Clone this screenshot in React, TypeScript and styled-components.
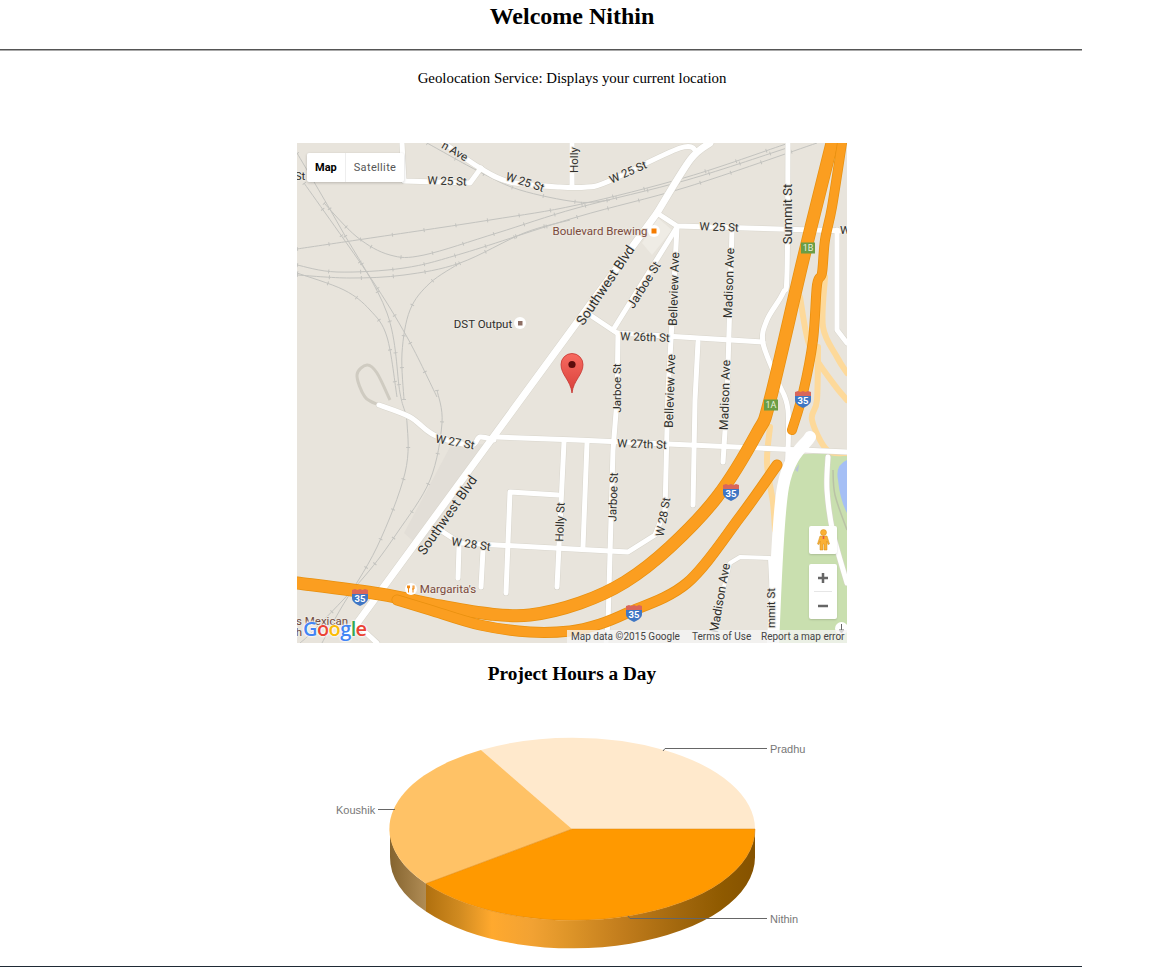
import React from 'react';
import styled, { createGlobalStyle } from 'styled-components';

type Pt = [number, number];
type Line = { pts: Pt[]; w: number; curved?: boolean };
type Label = { t: string; x: number; y: number; r?: number; c?: string; s?: number };

const GlobalStyle = createGlobalStyle`
  html, body { margin: 0; padding: 0; background: #fff; overflow: hidden; }
  body { font-family: "Liberation Serif", "Times New Roman", serif; color: #000; }
`;

const Page = styled.div`
  width: 1144px;
  height: 967px;
  display: flex;
  flex-direction: column;
`;

const Title = styled.h2`
  margin: 0;
  height: 32px;
  line-height: 32px;
  font-size: 24px;
  font-weight: bold;
  text-align: center;
`;

const Rule = styled.hr<{ $dark?: boolean }>`
  flex: none;
  width: 1082px;
  height: 0;
  margin: ${(p) => (p.$dark ? '0' : '17px 0 0')};
  border: 0;
  border-top: 1px solid ${(p) => (p.$dark ? '#1f2a35' : '#555')};
  border-bottom: 1px solid #aaa;
`;

const Intro = styled.p`
  margin: 18px 0 0;
  line-height: 18px;
  font-size: 14.85px;
  text-align: center;
`;

const MapBox = styled.div`
  position: relative;
  flex: none;
  width: 550px;
  height: 500px;
  margin: 56px auto 0;
  overflow: hidden;
  background: #e8e4dc;
  font-family: Roboto, "Liberation Sans", sans-serif;
`;

const MapArt = styled.svg`
  display: block;
  text {
    font-family: Roboto, "Liberation Sans", sans-serif;
    font-size: 11.5px;
    text-anchor: middle;
    dominant-baseline: central;
    paint-order: stroke;
    stroke: #ece9e2;
    stroke-width: 2px;
    stroke-linejoin: round;
  }
`;

const TypeControl = styled.div`
  position: absolute;
  top: 10px;
  left: 10px;
  display: flex;
  height: 29px;
  background: #fff;
  border-radius: 2px;
  box-shadow: 0 1px 3px rgba(0, 0, 0, 0.2);
`;

const TypeTab = styled.div<{ $active?: boolean }>`
  padding: 0 8px;
  line-height: 29px;
  font-size: 11px;
  font-weight: ${(p) => (p.$active ? 'bold' : 'normal')};
  letter-spacing: ${(p) => (p.$active ? '0' : '0.35px')};
  color: ${(p) => (p.$active ? '#000' : '#565656')};
  border-left: ${(p) => (p.$active ? '0' : '1px solid #eee')};
`;

const ControlCard = styled.div`
  position: absolute;
  right: 10px;
  width: 28px;
  background: #fff;
  border-radius: 2px;
  box-shadow: 0 1px 2px rgba(0, 0, 0, 0.15);
  display: flex;
  flex-direction: column;
  align-items: center;
`;

const Pegman = styled(ControlCard)`
  top: 383px;
  height: 28px;
  justify-content: center;
`;

const Zoomer = styled(ControlCard)`
  top: 421px;
  height: 55px;
`;

const ZoomKey = styled.div`
  flex: 1;
  display: flex;
  align-items: center;
  justify-content: center;
`;

const ZoomSep = styled.div`
  width: 18px;
  height: 1px;
  background: #e6e6e6;
`;

const PinHint = styled.div`
  position: absolute;
  right: 0;
  bottom: 13px;
  width: 13px;
  height: 13px;
  border-radius: 50%;
  background: #fff;
  transform: translate(1px, 5px);
  display: flex;
  align-items: center;
  justify-content: center;
`;

const Attribution = styled.div`
  position: absolute;
  right: 0;
  bottom: 0;
  width: 280px;
  height: 13px;
  display: flex;
  background: rgba(245, 245, 245, 0.78);
  font-size: 10px;
  line-height: 13px;
  color: #444;
`;

const AttrItem = styled.span<{ $w: number }>`
  width: ${(p) => p.$w}px;
  padding-left: 4px;
  box-sizing: border-box;
  white-space: nowrap;
`;

const GoogleLogo = styled.div`
  position: absolute;
  left: 6px;
  bottom: 1px;
  font-family: "Open Sans", "Liberation Sans", sans-serif;
  font-size: 20px;
  line-height: 26px;
  font-weight: 600;
  letter-spacing: -0.6px;
  text-shadow: 0 0 2px #fff, 0 0 2px #fff, 0 0 3px #fff;
`;

const LogoLetter = styled.span<{ $c: string }>`
  color: ${(p) => p.$c};
`;

const ChartTitle = styled.h3`
  margin: 20px 0 0;
  line-height: 22px;
  font-size: 19.3px;
  font-weight: bold;
  text-align: center;
`;

const ChartBox = styled.div`
  flex: none;
  width: 550px;
  height: 281px;
  margin: 0 auto;
  svg { display: block; }
  text {
    font-family: "Liberation Sans", Arial, sans-serif;
    font-size: 11px;
    fill: #777;
  }
`;

// Catmull-Rom through the points, keeps the curved roads from looking like polylines
const smooth = (pts: Pt[]) => {
  let d = `M${pts[0][0]} ${pts[0][1]}`;
  for (let i = 0; i < pts.length - 1; i++) {
    const p0 = pts[Math.max(i - 1, 0)];
    const p1 = pts[i];
    const p2 = pts[i + 1];
    const p3 = pts[Math.min(i + 2, pts.length - 1)];
    const c1x = p1[0] + (p2[0] - p0[0]) / 6;
    const c1y = p1[1] + (p2[1] - p0[1]) / 6;
    const c2x = p2[0] - (p3[0] - p1[0]) / 6;
    const c2y = p2[1] - (p3[1] - p1[1]) / 6;
    d += ` C${c1x.toFixed(1)} ${c1y.toFixed(1)} ${c2x.toFixed(1)} ${c2y.toFixed(1)} ${p2[0]} ${p2[1]}`;
  }
  return d;
};

const straight = (pts: Pt[]) => 'M' + pts.map((p) => `${p[0]} ${p[1]}`).join(' L');

const roadPath = (r: Line) => (r.curved ? smooth(r.pts) : straight(r.pts));

const rails: Pt[][] = [
  [[297, 249], [364, 239], [490, 220], [577, 205], [687, 177], [783, 145], [790, 143]],
  [[324, 203], [357, 237], [390, 255], [424, 255], [497, 233], [577, 208], [687, 180], [790, 147]],
  [[297, 265], [337, 272], [404, 268], [464, 253], [577, 217], [687, 187], [817, 143]],
  [[297, 275], [350, 278], [404, 275], [460, 263], [524, 233], [570, 220]],
  [[460, 263], [430, 283], [410, 310], [402, 353], [404, 400]],
  [[437, 390], [442, 423], [430, 480], [397, 533], [364, 577], [314, 630], [300, 643]],
  [[297, 153], [340, 227], [387, 313], [400, 393], [407, 423], [405, 473], [377, 547], [340, 610], [322, 643]],
  [[304, 183], [370, 277], [407, 337], [437, 397]],
  [[297, 273], [344, 290], [370, 310], [387, 337], [397, 397]],
  [[427, 143], [480, 172], [520, 190], [577, 202], [610, 200]],
];

const ramps: Line[] = [
  { pts: [[800, 297], [810, 347], [833, 383], [847, 400]], w: 6, curved: true },
  { pts: [[825, 277], [823, 327], [837, 357], [847, 373]], w: 6, curved: true },
  { pts: [[818, 347], [817, 400], [812, 420], [827, 450], [847, 453]], w: 6, curved: true },
  { pts: [[770, 427], [767, 463], [773, 503], [775, 530]], w: 6, curved: true },
];

const roads: Line[] = [
  { pts: [[402, 143], [404, 181], [470, 183], [481, 168]], w: 5 },
  { pts: [[444, 143], [480, 168], [510, 182], [560, 187], [587, 187], [607, 182], [680, 148], [697, 152]], w: 5, curved: true },
  { pts: [[572, 143], [572, 187]], w: 5 },
  { pts: [[710, 143], [690, 160], [657, 213]], w: 7, curved: true },
  { pts: [[657, 213], [347, 637]], w: 7 },
  { pts: [[363, 630], [377, 643]], w: 5 },
  { pts: [[657, 213], [677, 226], [847, 231]], w: 5 },
  { pts: [[677, 227], [613, 330]], w: 5 },
  { pts: [[677, 227], [671, 340], [668, 390], [665, 510]], w: 5 },
  { pts: [[665, 510], [655, 535], [628, 552], [460, 543], [440, 530]], w: 5 },
  { pts: [[590, 315], [617, 333], [763, 342]], w: 5 },
  { pts: [[618, 333], [617, 400], [613, 450], [608, 623], [606, 643]], w: 5 },
  { pts: [[732, 230], [727, 400], [723, 462]], w: 5 },
  { pts: [[698, 342], [695, 400], [693, 505]], w: 5 },
  { pts: [[497, 437], [577, 440], [847, 452]], w: 5 },
  { pts: [[379, 405], [410, 417], [434, 435], [470, 445], [480, 437], [494, 440]], w: 5, curved: true },
  { pts: [[587, 443], [583, 547]], w: 5 },
  { pts: [[564, 442], [557, 587]], w: 5 },
  { pts: [[558, 495], [510, 492], [506, 593]], w: 5 },
  { pts: [[459, 547], [458, 578]], w: 5 },
  { pts: [[483, 550], [481, 587]], w: 5 },
  { pts: [[788, 143], [787, 273], [783, 293], [767, 320], [763, 343], [777, 380], [788, 410], [787, 477]], w: 5, curved: true },
  { pts: [[713, 630], [730, 563], [740, 557], [770, 558], [772, 597]], w: 4 },
  { pts: [[837, 230], [837, 330], [847, 343]], w: 5 },
  { pts: [[828, 457], [827, 490], [833, 533], [847, 583]], w: 5, curved: true },
];

const highways: Line[] = [
  { pts: [[832, 143], [803, 260], [770, 400], [757, 433], [717, 497], [670, 547], [625, 582], [580, 603], [530, 615], [490, 614], [440, 606], [380, 594], [297, 583]], w: 13 },
  { pts: [[842, 143], [832, 207], [825, 240], [822, 273], [817, 285], [813, 340], [803, 393], [792, 430]], w: 10 },
  { pts: [[777, 465], [740, 517], [687, 583], [627, 613], [600, 624], [570, 631], [530, 632], [480, 625], [430, 610], [397, 600]], w: 11 },
];

const labels: Label[] = [
  { t: 'St', x: 300, y: 176 },
  { t: 'n Ave', x: 455, y: 151, r: 30 },
  { t: 'W 25 St', x: 447, y: 181, r: 2 },
  { t: 'W 25 St', x: 525, y: 182, r: 18 },
  { t: 'Holly', x: 574, y: 160, r: -90 },
  { t: 'W 25 St', x: 628, y: 172, r: -24 },
  { t: 'Boulevard Brewing', x: 600, y: 231, c: '#7b4a3c' },
  { t: 'W 25 St', x: 719, y: 227, r: 2 },
  { t: 'W', x: 845, y: 230 },
  { t: 'Summit St', x: 787, y: 214, r: -90, s: 13 },
  { t: 'Southwest Blvd', x: 605, y: 285, r: -56, s: 13.5 },
  { t: 'Jarboe St', x: 644, y: 285, r: -58, s: 12.2 },
  { t: 'Belleview Ave', x: 674, y: 289, r: -88, s: 12.2 },
  { t: 'Madison Ave', x: 729, y: 283, r: -88, s: 12.2 },
  { t: 'W 26th St', x: 645, y: 337, r: 2 },
  { t: 'Jarboe St', x: 617, y: 388, r: -90 },
  { t: 'Belleview Ave', x: 670, y: 391, r: -88, s: 12.2 },
  { t: 'Madison Ave', x: 725, y: 395, r: -88, s: 12.2 },
  { t: 'DST Output', x: 483, y: 324 },
  { t: 'W 27 St', x: 455, y: 442, r: 10 },
  { t: 'W 27th St', x: 642, y: 444, r: 2 },
  { t: 'Southwest Blvd', x: 447, y: 515, r: -55, s: 13.5 },
  { t: 'W 28 St', x: 471, y: 544, r: 8 },
  { t: 'Holly St', x: 560, y: 522, r: -88 },
  { t: 'Jarboe St', x: 613, y: 497, r: -88 },
  { t: 'W 28 St', x: 663, y: 517, r: -80 },
  { t: "Margarita's", x: 448, y: 589, c: '#7b4a3c' },
  { t: 'Madison Ave', x: 720, y: 598, r: -80, s: 12.2 },
  { t: 'mmit St', x: 771, y: 608, r: -90 },
  { t: 's Mexican', x: 322, y: 621, c: '#6f4a3e' },
  { t: 'h', x: 299, y: 632, c: '#6f4a3e' },
];

const shields: Pt[] = [[360, 597], [731, 492], [634, 613], [803, 399]];

const exitSigns: { t: string; x: number; y: number }[] = [
  { t: '1B', x: 808, y: 248 },
  { t: '1A', x: 771, y: 405 },
];

const logoLetters: [string, string][] = [
  ['G', '#4285f4'],
  ['o', '#ea4335'],
  ['o', '#fbbc05'],
  ['g', '#4285f4'],
  ['l', '#34a853'],
  ['e', '#ea4335'],
];

const Shield: React.FC<{ x: number; y: number }> = ({ x, y }) => (
  <g transform={`translate(${x} ${y})`}>
    <path d="M-8 -7 L-5 -8 L-2.500 -7 L0 -8 L2.500 -7 L5 -8 L8 -7 L8 -3 L-8 -3 Z" fill="#d9665a" />
    <path d="M-8 -3 H8 V1 C8 5 4 7 0 9 C-4 7 -8 5 -8 1 Z" fill="#3f76c4" />
    <text x={0} y={1} style={{ fontSize: 9.5, fontWeight: 700, fill: '#fff', strokeWidth: 0 }}>35</text>
  </g>
);

const MapDrawing: React.FC = () => (
  <MapArt width={550} height={500} viewBox="297 143 550 500">
    <polygon points="450,447 493,443 420,547 404,533" fill="#e2ded7" />
    <polygon points="642,243 658,218 672,230 652,255" fill="#efece5" />
    <polygon points="787,455 847,452 847,643 778,643" fill="#c9dfaf" />
    <path d="M847 460 Q835 465 838 480 Q840 500 847 513 Z" fill="#a5bff5" />
    <path d={smooth([[833, 470], [835, 495], [847, 530]])} fill="none" stroke="#b9c2a6" strokeWidth={1.5} />
    <path d={smooth([[379, 405], [365, 397], [357, 375], [367, 365], [377, 373], [390, 400]])} fill="none" stroke="#cfcbc1" strokeWidth={3} />

    {rails.map((pts, i) => (
      <g key={i} fill="none" stroke="#c3c3bf">
        <path d={smooth(pts)} strokeWidth={1} />
        <path d={smooth(pts)} strokeWidth={4} strokeDasharray="1 31" />
      </g>
    ))}

    {ramps.map((r, i) => (
      <path key={i} d={roadPath(r)} fill="none" stroke="#fdd99a" strokeWidth={r.w} strokeLinecap="round" />
    ))}
    {roads.map((r, i) => (
      <path key={i} d={roadPath(r)} fill="none" stroke="#d8d5cc" strokeWidth={r.w + 1} strokeLinecap="round" strokeLinejoin="round" />
    ))}
    {roads.map((r, i) => (
      <path key={i} d={roadPath(r)} fill="none" stroke="#fff" strokeWidth={r.w} strokeLinecap="round" strokeLinejoin="round" />
    ))}
    <path d={smooth([[810, 437], [783, 487], [773, 643]])} fill="none" stroke="#fff" strokeWidth={12} strokeLinecap="round" />
    <path d="M795 470 L799 464 L798 472 Z" fill="#b9c3d6" />

    {highways.map((h, i) => (
      <g key={i} fill="none" strokeLinecap="round">
        <path d={smooth(h.pts)} stroke="#e8900f" strokeWidth={h.w} />
        <path d={smooth(h.pts)} stroke="#fb9e20" strokeWidth={h.w - 1.500} />
      </g>
    ))}

    {shields.map(([x, y], i) => (
      <Shield key={i} x={x} y={y} />
    ))}
    {exitSigns.map((s) => (
      <g key={s.t}>
        <rect x={s.x - 7} y={s.y - 5.500} width={14} height={11} fill="#6b9d45" />
        <text x={s.x} y={s.y} style={{ fontSize: 9, fill: '#e9f0dd', strokeWidth: 0 }}>{s.t}</text>
      </g>
    ))}

    {labels.map((l, i) => (
      <text
        key={i}
        x={l.x}
        y={l.y}
        fill={l.c || '#2f2f2c'}
        fontSize={l.s}
        style={l.s ? { fontSize: l.s } : undefined}
        transform={l.r ? `rotate(${l.r} ${l.x} ${l.y})` : undefined}
      >
        {l.t}
      </text>
    ))}

    <circle cx={654} cy={231} r={6} fill="#fff" />
    <rect x={651.500} y={228.500} width={5} height={5} fill="#f57c00" />
    <circle cx={520} cy={323} r={6} fill="#fff" />
    <rect x={518} y={321} width={4.500} height={4.500} fill="#8d6e63" />
    <circle cx={411} cy={589} r={6} fill="#fff" />
    <path d="M408.500 585.500 V592.500 M413 585.500 V592.500 M407.500 585.500 V588 H409.500 V585.500 M412 589 H414 V585.500" fill="none" stroke="#ef8a17" strokeWidth={1} />

    <defs>
      <linearGradient id="pin" x1="0" y1="0" x2="0" y2="1">
        <stop offset="0" stopColor="#f76a60" />
        <stop offset="1" stopColor="#d8403a" />
      </linearGradient>
    </defs>
    <path
      d="M572 393 C570.500 380 561 375 561 364.500 A11 11 0 1 1 583 364.500 C583 375 573.500 380 572 393 Z"
      fill="url(#pin)"
      stroke="#c5342e"
      strokeWidth={0.8}
    />
    <circle cx={572} cy={364.500} r={3.600} fill="#5c0c0c" />
  </MapArt>
);

const PegmanIcon: React.FC = () => (
  <svg width={15} height={22} viewBox="0 0 14 22">
    <circle cx={7} cy={3.500} r={3} fill="#fbb034" stroke="#d08c18" strokeWidth={0.5} />
    <path d="M3.500 7 H10.500 L13 15 L11.500 15.500 L10.500 12 V21 H7.500 V15 H6.500 V21 H3.500 V12 L2.500 15.500 L1 15 Z" fill="#fbb034" stroke="#d08c18" strokeWidth={0.5} />
    <path d="M7 7 V10" stroke="#e2574c" strokeWidth={1.500} />
  </svg>
);

const PlusIcon: React.FC = () => (
  <svg width={12} height={12} viewBox="0 0 12 12">
    <path d="M1 6 H11 M6 1 V11" stroke="#666" strokeWidth={2.500} />
  </svg>
);

const MinusIcon: React.FC = () => (
  <svg width={12} height={12} viewBox="0 0 12 12">
    <path d="M1 6 H11" stroke="#666" strokeWidth={2.500} />
  </svg>
);

const PinHintIcon: React.FC = () => (
  <svg width={7} height={9} viewBox="0 0 7 9">
    <path d="M3.500 0 V6 M1 6 H6 L3.500 9 Z" fill="#666" stroke="#666" strokeWidth={1} />
  </svg>
);

const PieChart: React.FC = () => (
  <svg width={550} height={281} viewBox="297 685 550 281">
    <defs>
      <linearGradient id="wallFront" gradientUnits="userSpaceOnUse" x1={426} y1={0} x2={755} y2={0}>
        <stop offset="0" stopColor="#b0700f" />
        <stop offset="0.1" stopColor="#d08a20" />
        <stop offset="0.2" stopColor="#ffa92e" />
        <stop offset="0.32" stopColor="#f2a233" />
        <stop offset="0.44" stopColor="#dd9428" />
        <stop offset="0.6" stopColor="#c17c1c" />
        <stop offset="0.78" stopColor="#a0660c" />
        <stop offset="0.9" stopColor="#8f5a00" />
        <stop offset="1" stopColor="#855200" />
      </linearGradient>
      <linearGradient id="wallLeft" gradientUnits="userSpaceOnUse" x1={390} y1={0} x2={426} y2={0}>
        <stop offset="0" stopColor="#85642f" />
        <stop offset="1" stopColor="#b08c55" />
      </linearGradient>
    </defs>
    <path d="M755 829 A182.500 91 0 0 1 426 883.600 L426 911.600 A182.500 91 0 0 0 755 857 Z" fill="url(#wallFront)" />
    <path d="M426 883.600 A182.500 91 0 0 1 390 829 L390 857 A182.500 91 0 0 0 426 911.600 Z" fill="url(#wallLeft)" />
    <path d="M572 829 L481 750 A182.500 91 0 0 1 755 829 Z" fill="#ffe9cc" />
    <path d="M572 829 L426 883.600 A182.500 91 0 0 1 481 750 Z" fill="#ffc266" />
    <path d="M572 829 L755 829 A182.500 91 0 0 1 426 883.600 Z" fill="#ff9900" stroke="#d98410" strokeWidth={0.5} />

    <path d="M663 751 L665 748.500 H767" fill="none" stroke="#666" strokeWidth={1} />
    <path d="M395 809.500 L393 809.500 H378" fill="none" stroke="#666" strokeWidth={1} />
    <path d="M628 916 L630 918.500 H767" fill="none" stroke="#666" strokeWidth={1} />
    <text x={770} y={753}>Pradhu</text>
    <text x={336} y={814}>Koushik</text>
    <text x={770} y={923}>Nithin</text>
  </svg>
);

const App: React.FC = () => (
  <Page>
    <GlobalStyle />
    <Title>Welcome Nithin</Title>
    <Rule />
    <Intro>Geolocation Service: Displays your current location</Intro>

    <MapBox>
      <MapDrawing />
      <TypeControl>
        <TypeTab $active>Map</TypeTab>
        <TypeTab>Satellite</TypeTab>
      </TypeControl>
      <Pegman>
        <PegmanIcon />
      </Pegman>
      <Zoomer>
        <ZoomKey>
          <PlusIcon />
        </ZoomKey>
        <ZoomSep />
        <ZoomKey>
          <MinusIcon />
        </ZoomKey>
      </Zoomer>
      <PinHint>
        <PinHintIcon />
      </PinHint>
      <GoogleLogo>
        {logoLetters.map(([ch, c], i) => (
          <LogoLetter key={i} $c={c}>{ch}</LogoLetter>
        ))}
      </GoogleLogo>
      <Attribution>
        <AttrItem $w={121}>Map data ©2015 Google</AttrItem>
        <AttrItem $w={69}>Terms of Use</AttrItem>
        <AttrItem $w={90}>Report a map error</AttrItem>
      </Attribution>
    </MapBox>

    <ChartTitle>Project Hours a Day</ChartTitle>
    <ChartBox>
      <PieChart />
    </ChartBox>
    <Rule $dark />
  </Page>
);

export default App;
